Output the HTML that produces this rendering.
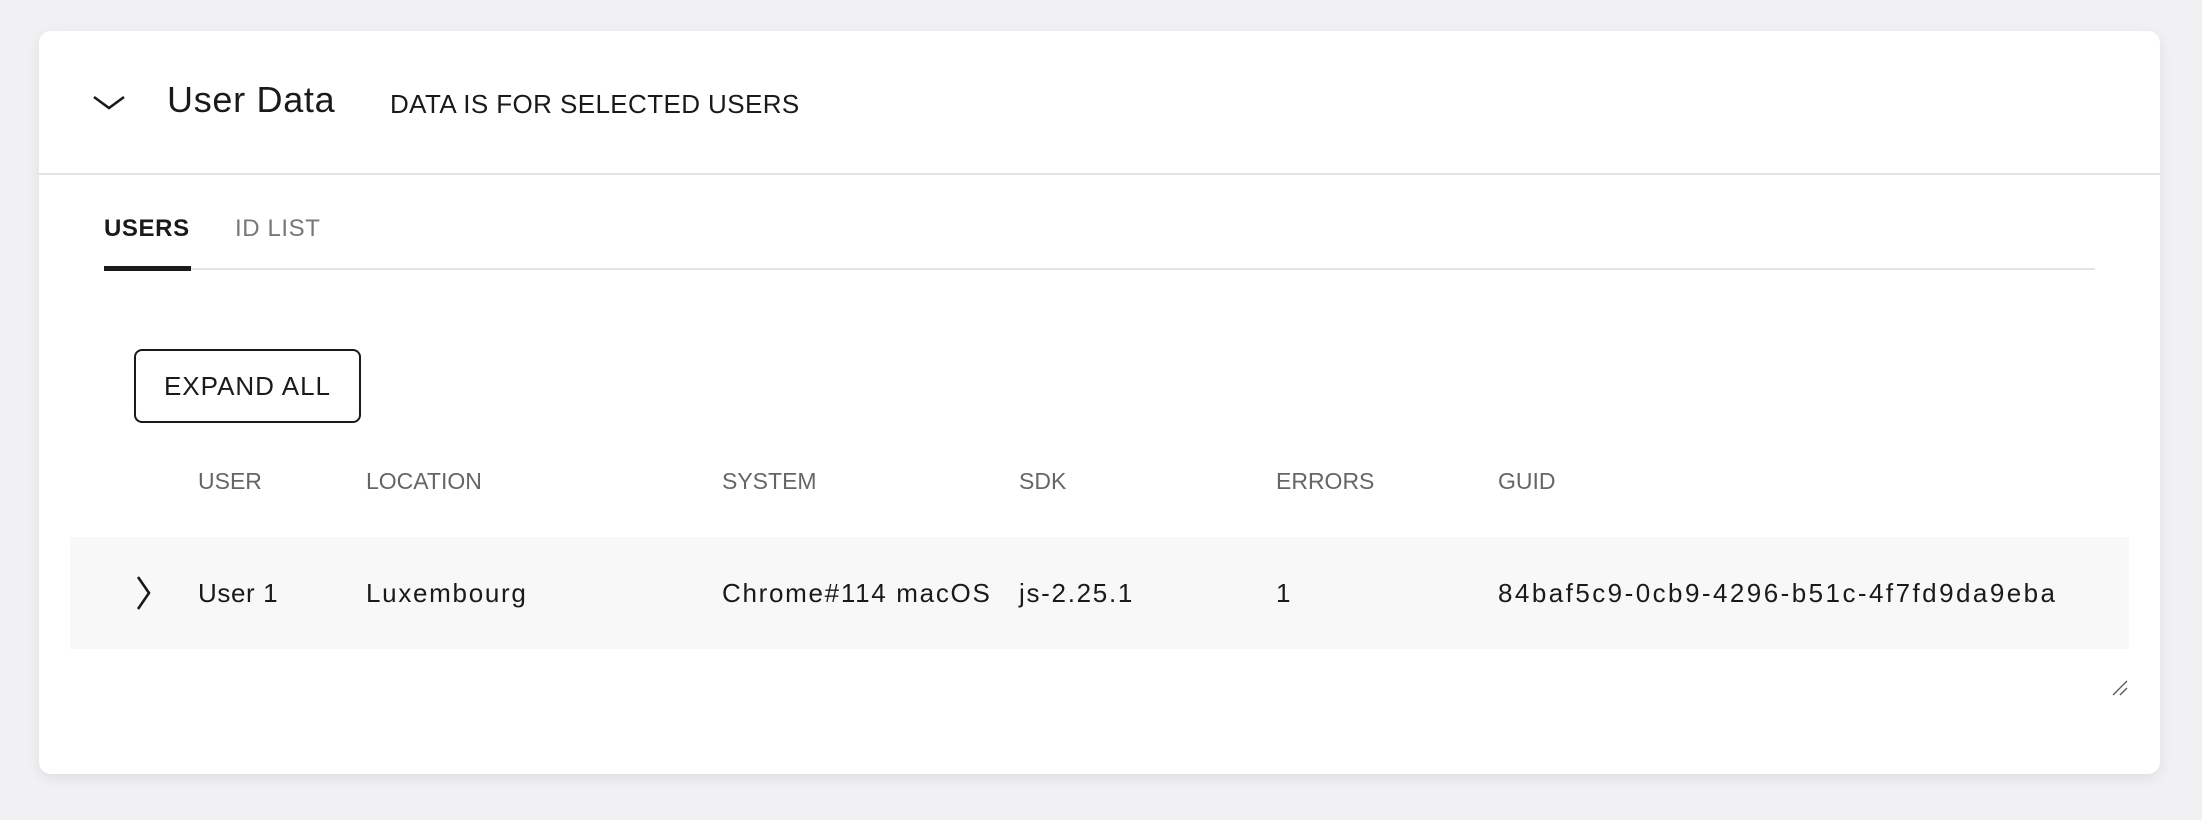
<!DOCTYPE html>
<html><head><meta charset="utf-8"><style>
body{margin:0;width:2202px;height:820px;background:#f1f1f3;font-family:"Liberation Sans",sans-serif;color:#1a1a1a;position:relative;overflow:hidden}
.card{position:absolute;left:39px;top:31px;width:2121px;height:743px;background:#fff;border-radius:12px;box-shadow:0 4px 14px rgba(0,0,0,0.08)}
.a{position:absolute;white-space:nowrap}
</style></head><body>
<div class="card"></div>
<svg class="a" style="left:92px;top:94px" width="36" height="18" viewBox="0 0 36 18"><path d="M2 3 L17 14 L32 3" fill="none" stroke="#1a1a1a" stroke-width="2.6"/></svg>
<div class="a" style="left:167px;top:80px;font-size:36px;line-height:40px;letter-spacing:0.7px">User Data</div>
<div class="a" style="left:390px;top:89px;font-size:26px;line-height:30px;letter-spacing:0.4px">DATA IS FOR SELECTED USERS</div>
<div class="a" style="left:39px;top:173px;width:2121px;height:2px;background:#e3e3e6"></div>
<div class="a" style="left:104px;top:215px;font-size:24px;line-height:28px;font-weight:bold;letter-spacing:0.6px">USERS</div>
<div class="a" style="left:235px;top:215px;font-size:24px;line-height:28px;color:#777;letter-spacing:0.6px">ID LIST</div>
<div class="a" style="left:104px;top:268px;width:1991px;height:2px;background:#e3e3e6"></div>
<div class="a" style="left:104px;top:266px;width:87px;height:5px;background:#1a1a1a"></div>
<div class="a" style="left:134px;top:349px;width:227px;height:74px;border:2px solid #1a1a1a;border-radius:8px;box-sizing:border-box;font-size:26px;line-height:70px;text-align:center;letter-spacing:1px">EXPAND ALL</div>
<div style="font-size:23px;color:#666;line-height:26px">
<div class="a" style="left:198px;top:468px">USER</div>
<div class="a" style="left:366px;top:468px">LOCATION</div>
<div class="a" style="left:722px;top:468px">SYSTEM</div>
<div class="a" style="left:1019px;top:468px">SDK</div>
<div class="a" style="left:1276px;top:468px">ERRORS</div>
<div class="a" style="left:1498px;top:468px">GUID</div>
</div>
<div class="a" style="left:70px;top:537px;width:2059px;height:112px;background:#f8f8f8"></div>
<svg class="a" style="left:134px;top:575px" width="20" height="36" viewBox="0 0 20 36"><path d="M4 2 L15 18 L4 34" fill="none" stroke="#1a1a1a" stroke-width="2.6"/></svg>
<div style="font-size:26px;line-height:30px;letter-spacing:1.7px">
<div class="a" style="left:198px;top:578px;letter-spacing:0.6px">User 1</div>
<div class="a" style="left:366px;top:578px">Luxembourg</div>
<div class="a" style="left:722px;top:578px">Chrome#114 macOS</div>
<div class="a" style="left:1019px;top:578px">js-2.25.1</div>
<div class="a" style="left:1276px;top:578px">1</div>
<div class="a" style="left:1498px;top:578px;letter-spacing:2.45px">84baf5c9-0cb9-4296-b51c-4f7fd9da9eba</div>
</div>
<svg class="a" style="left:2110px;top:678px" width="20" height="20" viewBox="0 0 20 20"><path d="M3 17 L17 3 M10 17 L17 10" stroke="#555" stroke-width="1.3"/></svg>
</body></html>
